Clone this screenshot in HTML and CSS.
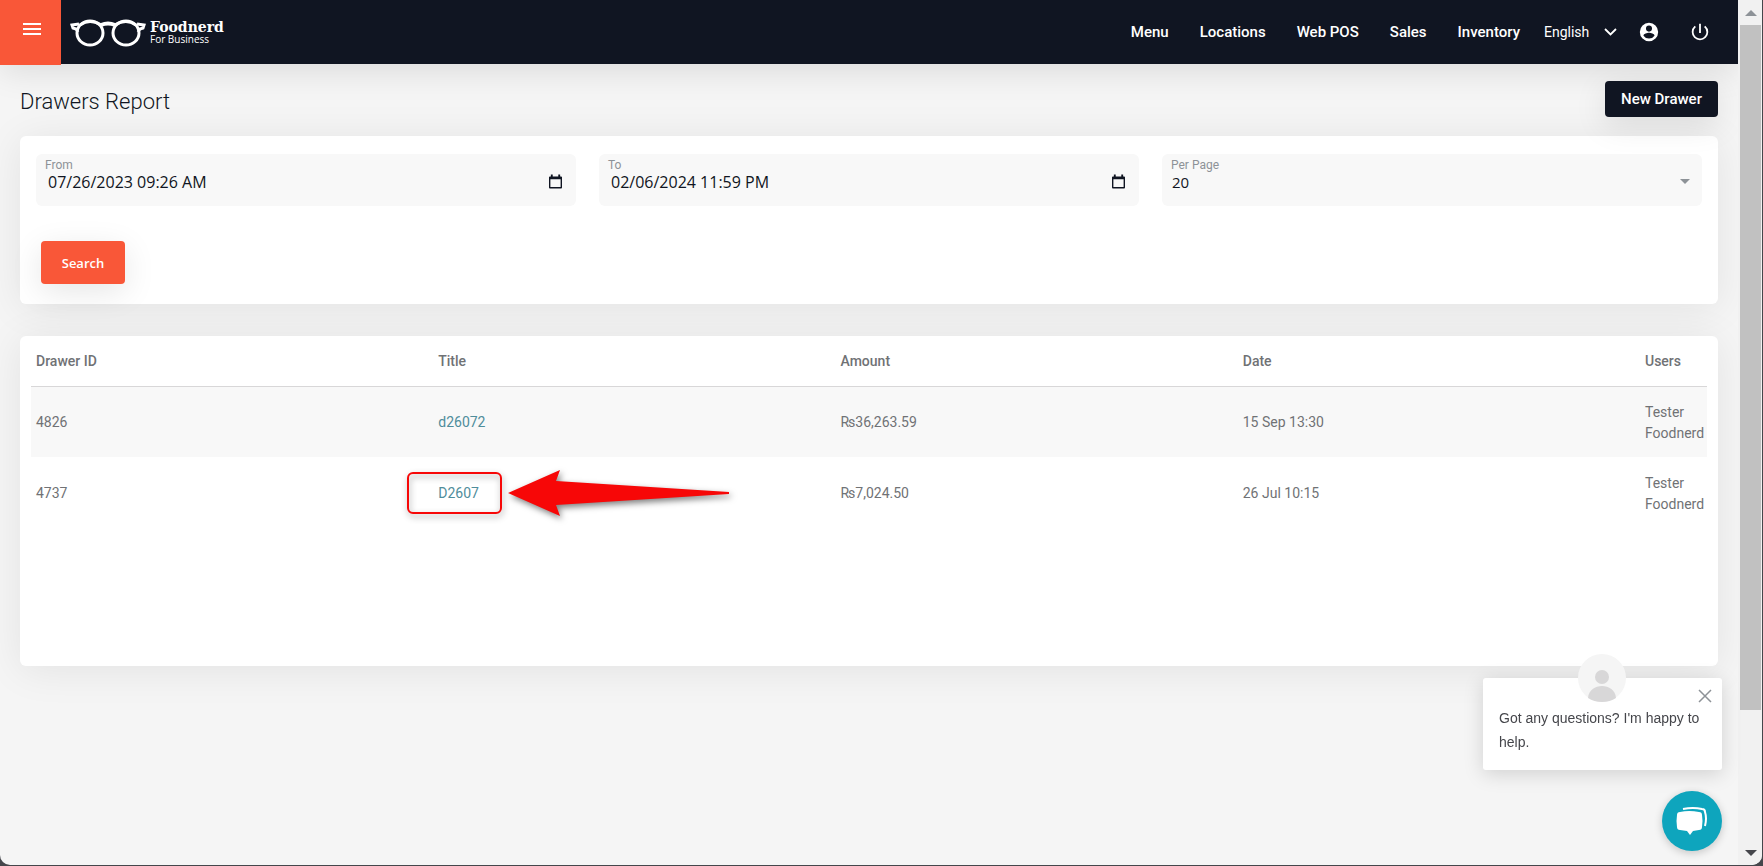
FILE: index.html
```html
<!DOCTYPE html>
<html lang="en">

<head>
    <meta charset="UTF-8">
    <meta name="viewport" content="width=device-width, initial-scale=1.0">
    <title>Drawers Report</title>
    <link rel="stylesheet" href="styles.css">
</head>

<body>
    <div class="window">
        <div class="page">
            <header>
                <button class="menu-toggle" aria-label="Toggle menu">
                    <svg width="18" height="12" viewBox="0 0 18 12"><path d="M0 0h18v2H0zM0 5h18v2H0zM0 10h18v2H0z" fill="#fff"/></svg>
                </button>
                <a class="logo" href="#">
                    <svg width="76" height="30" viewBox="0 0 76 30" fill="none" stroke="#fff">
                        <ellipse cx="20" cy="16" rx="13" ry="12" stroke-width="3"/>
                        <ellipse cx="56" cy="16" rx="13" ry="12" stroke-width="3"/>
                        <path d="M31 8Q38 5 45 8" stroke-width="4"/>
                        <path d="M9 7L2 8L3 11L6 12L8 15M67 7L74 8L73 11L70 12L68 15" stroke-width="3"/>
                        <path d="M10 8Q20 1 31 8M45 8Q56 1 66 8" stroke-width="3"/>
                    </svg>
                    <span class="logo-text">
                        <strong>Foodnerd</strong>
                        <small>For Business</small>
                    </span>
                </a>
                <nav>
                    <a href="#">Menu</a>
                    <a href="#">Locations</a>
                    <a href="#">Web POS</a>
                    <a href="#">Sales</a>
                    <a href="#">Inventory</a>
                </nav>
                <div class="language">
                    <select aria-label="Language">
                        <option>English</option>
                    </select>
                    <svg width="13" height="8" viewBox="0 0 13 8"><path d="M1 1l5.500 5.500L12 1" fill="none" stroke="#fff" stroke-width="1.800"/></svg>
                </div>
                <a class="icon-link" href="#" aria-label="Account">
                    <svg width="22" height="22" viewBox="0 0 24 24"><path fill="#fff" d="M12 2a10 10 0 1 0 0 20 10 10 0 0 0 0-20zm0 3a3.300 3.300 0 1 1 0 6.600A3.300 3.300 0 0 1 12 5zm0 14.200a7.200 7.200 0 0 1-6-3.200c0-2 4-3.100 6-3.100s6 1.100 6 3.100a7.200 7.200 0 0 1-6 3.200z"/></svg>
                </a>
                <a class="icon-link" href="#" aria-label="Log out">
                    <svg width="22" height="22" viewBox="0 0 24 24"><path fill="#fff" d="M13 3h-2v10h2V3zm4.830 2.170l-1.420 1.420A6.920 6.920 0 0 1 19 12a7 7 0 1 1-11.420-5.420L6.170 5.170A8.930 8.930 0 0 0 3 12a9 9 0 0 0 18 0 8.930 8.930 0 0 0-3.170-6.830z"/></svg>
                </a>
            </header>

            <main>
                <div class="title-bar">
                    <h1>Drawers Report</h1>
                    <button class="btn-dark">New Drawer</button>
                </div>

                <form class="card filters">
                    <div class="fields">
                        <div class="field">
                            <label for="from">From</label>
                            <input type="text" id="from" value="07/26/2023 09:26 AM">
                            <svg class="calendar" width="13" height="15" viewBox="0 0 14 15"><path fill="#101522" fill-rule="evenodd" d="M2 0h2v2h6V0h2v2h1q1 0 1 1v11q0 1-1 1H1q-1 0-1-1V3q0-1 1-1h1zM1.500 5v8.500h11V5z"/></svg>
                        </div>
                        <div class="field">
                            <label for="to">To</label>
                            <input type="text" id="to" value="02/06/2024 11:59 PM">
                            <svg class="calendar" width="13" height="15" viewBox="0 0 14 15"><path fill="#101522" fill-rule="evenodd" d="M2 0h2v2h6V0h2v2h1q1 0 1 1v11q0 1-1 1H1q-1 0-1-1V3q0-1 1-1h1zM1.500 5v8.500h11V5z"/></svg>
                        </div>
                        <div class="field">
                            <label for="per-page">Per Page</label>
                            <select id="per-page">
                                <option>20</option>
                            </select>
                            <svg class="caret" width="10" height="5" viewBox="0 0 10 5"><path fill="#8d9297" d="M0 0h10L5 5z"/></svg>
                        </div>
                    </div>
                    <button type="button" class="btn-search">Search</button>
                </form>

                <div class="card drawers">
                    <table>
                        <thead>
                            <tr>
                                <th>Drawer ID</th>
                                <th>Title</th>
                                <th>Amount</th>
                                <th>Date</th>
                                <th class="users">Users</th>
                            </tr>
                        </thead>
                        <tbody>
                            <tr>
                                <td>4826</td>
                                <td><a href="#">d26072</a></td>
                                <td>₨36,263.59</td>
                                <td>15 Sep 13:30</td>
                                <td>Tester Foodnerd</td>
                            </tr>
                            <tr>
                                <td>4737</td>
                                <td class="marked">
                                    <a href="#">D2607</a>
                                    <span class="marker"></span>
                                    <svg class="arrow" width="224" height="48" viewBox="0 0 224 48"><path fill="#f70707" d="M1 24L53 1L49 12L222 23V25L49 36L53 47Z"/></svg>
                                </td>
                                <td>₨7,024.50</td>
                                <td>26 Jul 10:15</td>
                                <td>Tester Foodnerd</td>
                            </tr>
                        </tbody>
                    </table>
                </div>
            </main>
        </div>

        <div class="scrollbar">
            <svg width="12" height="6" viewBox="0 0 12 6"><path fill="#8d9297" d="M0 6h12L6 0z"/></svg>
            <div class="thumb"></div>
            <svg width="12" height="6" viewBox="0 0 12 6"><path fill="#45464b" d="M0 0h12L6 6z"/></svg>
        </div>
    </div>

    <div class="chat">
        <div class="chat-message">
            <svg class="avatar" width="48" height="48" viewBox="0 0 48 48">
                <circle cx="24" cy="24" r="24" fill="#f5f5f5"/>
                <circle cx="24" cy="23" r="7" fill="#d8d7d8"/>
                <path d="M10 44C11 28 37 28 38 44Q32 48 24 48T10 44z" fill="#d8d7d8"/>
            </svg>
            <button class="close" aria-label="Close">
                <svg width="14" height="14" viewBox="0 0 14 14"><path d="M1 1l12 12M13 1L1 13" stroke="#8d9297" stroke-width="1.500"/></svg>
            </button>
            <p>Got any questions? I'm happy to help.</p>
        </div>
        <button class="chat-button" aria-label="Open chat">
            <svg width="32" height="30" viewBox="0 0 32 30">
                <path fill="#fff" d="M4 6Q13 4 23 6Q26 6 26 9Q27 15 26 21Q26 24 23 24L17 25L14 29L11 25L4 24Q1 24 1 21Q0 15 1 9Q1 6 4 6z"/>
                <path fill="none" stroke="#fff" stroke-width="2" d="M7 3Q17 1 26 3Q29 3 29 6Q31 12 29 20"/>
            </svg>
        </button>
    </div>
</body>

</html>
```
FILE: styles.css
```css
* {
    box-sizing: border-box;
}

body {
    font-family: Roboto, sans-serif;
    font-size: 14px;
    margin: 0;
    background-color: #45464b;
    color: #707275;
}

a {
    text-decoration: none;
}

button {
    border: none;
    padding: 0;
    font-family: inherit;
    cursor: pointer;
}

svg {
    display: block;
}

.window {
    display: flex;
    height: calc(100vh - 1px);
    margin-right: 1px;
    background-color: #f5f5f5;
    border-radius: 0 0 10px 10px;
    overflow: hidden;
}

.page {
    flex: 1;
}

/* top bar */
header {
    display: flex;
    align-items: center;
    height: 64px;
    padding-right: 27px;
    background-color: #101522;
    box-shadow: 0 8px 32px rgba(0, 0, 0, 0.1);
}

.menu-toggle {
    display: flex;
    align-self: flex-start;
    justify-content: center;
    width: 61px;
    height: 65px;
    padding-top: 23px;
    padding-left: 3px;
    background-color: #f95738;
}

.logo {
    display: flex;
    align-items: center;
    gap: 4px;
    margin-left: 9px;
    color: white;
}

.logo-text {
    display: flex;
    flex-direction: column;
}

.logo strong {
    font-family: "DejaVu Serif", serif;
    font-size: 14px;
    line-height: 14px;
}

.logo small {
    font-family: "Open Sans", sans-serif;
    font-size: 10px;
    line-height: 10px;
}

nav {
    display: flex;
    gap: 31px;
    margin-left: auto;
}

nav a {
    color: white;
    font-size: 15px;
    font-weight: 500;
}

.language {
    position: relative;
    display: flex;
    align-items: center;
    margin: 0 21px 0 24px;
}

.language select {
    width: 73px;
    padding: 0;
    border: none;
    appearance: none;
    background: none;
    color: white;
    font-family: inherit;
    font-size: 14px;
}

.language svg {
    position: absolute;
    right: 0;
}

.icon-link + .icon-link {
    margin-left: 29px;
}

/* content */
main {
    padding: 0 20px;
}

.title-bar {
    display: flex;
    align-items: center;
    justify-content: space-between;
    height: 72px;
    padding-bottom: 2px;
}

h1 {
    margin: 4px 0 0;
    color: #101522;
    font-size: 22px;
    font-weight: 300;
}

.btn-dark {
    width: 113px;
    height: 36px;
    border-radius: 4px;
    background-color: #101522;
    color: white;
    font-size: 15px;
    font-weight: 500;
    box-shadow: 0 8px 32px rgba(0, 0, 0, 0.1);
}

.card {
    border-radius: 6px;
    background: white;
    box-shadow: 0 4px 40px rgba(0, 0, 0, 0.08);
}

.filters {
    padding: 18px 16px 20px;
}

.fields {
    display: grid;
    grid-template-columns: repeat(3, 1fr);
    gap: 23px;
    margin-bottom: 35px;
}

.field {
    position: relative;
    display: flex;
    flex-direction: column;
    height: 52px;
    padding: 5px 9px;
    border-radius: 6px;
    background-color: #f8f8f8;
}

.field label {
    color: #8d9297;
    font-size: 12px;
    line-height: 12px;
}

.field input,
.field select {
    width: 100%;
    height: 21px;
    padding: 0 3px;
    border: none;
    appearance: none;
    background: none;
    color: #101522;
    font-family: "Open Sans", sans-serif;
    font-size: 16px;
}

.field select {
    padding: 0 1px;
    font-size: 15px;
}

.calendar {
    position: absolute;
    top: 20px;
    right: 14px;
}

.caret {
    position: absolute;
    top: 25px;
    right: 12px;
}

.btn-search {
    display: block;
    width: 84px;
    height: 43px;
    margin-left: 5px;
    border-radius: 4px;
    background-color: #f95738;
    color: white;
    font-family: "Open Sans", sans-serif;
    font-size: 13px;
    font-weight: 600;
    box-shadow: 0 8px 32px rgba(0, 0, 0, 0.1);
}

.drawers {
    min-height: 330px;
    margin-top: 32px;
    padding: 0 11px;
}

table {
    width: 100%;
    table-layout: fixed;
    border-collapse: collapse;
}

th,
td {
    padding: 2px 5px 0;
    text-align: left;
    line-height: 21px;
}

th {
    height: 50px;
    border-bottom: 1px solid #d8d7d8;
    font-weight: 500;
}

td {
    height: 71px;
}

th.users {
    width: 67px;
}

td a {
    color: #4f8d9b;
}

tbody tr:nth-child(odd) {
    background-color: #f8f8f8;
}

/* red highlight round the drawer title */
.marked {
    position: relative;
}

.marker {
    position: absolute;
    top: 15px;
    left: -26px;
    width: 95px;
    height: 42px;
    border: 2px solid #f70707;
    border-radius: 6px;
    filter: drop-shadow(1px 3px 3px rgba(0, 0, 0, 0.4));
}

.arrow {
    position: absolute;
    top: 12px;
    left: 74px;
    filter: drop-shadow(2px 3px 3px rgba(0, 0, 0, 0.5));
}

.scrollbar {
    display: flex;
    flex-direction: column;
    align-items: center;
    width: 24px;
    padding: 10px 1px 9px 2px;
    background-color: #f1f1f1;
}

.thumb {
    width: 100%;
    height: 81%;
    margin: 9px 0 auto;
    background-color: #c1c1c1;
}

/* chat widget */
.chat {
    position: fixed;
    right: 41px;
    bottom: 15px;
    display: flex;
    flex-direction: column;
    align-items: flex-end;
    gap: 21px;
    font-family: "Liberation Sans", sans-serif;
}

.chat-message {
    position: relative;
    width: 239px;
    padding: 28px 16px 16px;
    border-radius: 3px;
    background: white;
    box-shadow: 0 4px 20px rgba(0, 0, 0, 0.15);
}

.chat-message p {
    margin: 0;
    color: #45464b;
    line-height: 24px;
}

.avatar {
    position: absolute;
    top: -24px;
    left: 95px;
}

.close {
    position: absolute;
    top: 11px;
    right: 10px;
    background: none;
}

.chat-button {
    display: flex;
    align-items: center;
    justify-content: center;
    width: 60px;
    height: 60px;
    border-radius: 50%;
    background-color: #0ea5bd;
    box-shadow: 0 2px 8px rgba(0, 0, 0, 0.2);
}
```
